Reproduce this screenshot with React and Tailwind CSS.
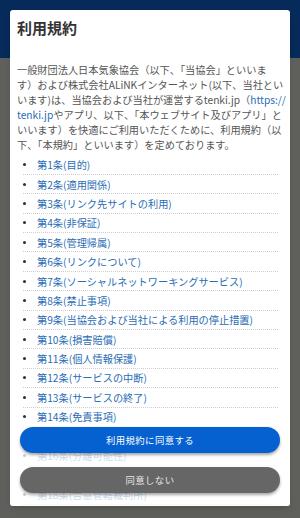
const articles = [
    "第1条(目的)",
    "第2条(適用関係)",
    "第3条(リンク先サイトの利用)",
    "第4条(非保証)",
    "第5条(管理帰属)",
    "第6条(リンクについて)",
    "第7条(ソーシャルネットワーキングサービス)",
    "第8条(禁止事項)",
    "第9条(当協会および当社による利用の停止措置)",
    "第10条(損害賠償)",
    "第11条(個人情報保護)",
    "第12条(サービスの中断)",
    "第13条(サービスの終了)",
    "第14条(免責事項)",
    "第15条(規約の変更)",
    "第16条(分離可能性)",
    "第17条(準拠法)",
    "第18条(合意管轄裁判所)",
];

export default function App() {
    return (
        <div
            className="relative w-[300px] h-[518px] overflow-hidden bg-[#5f5f5b]"
            style={{fontFamily: '"Noto Sans CJK JP", "Noto Sans", sans-serif'}}
        >
            <div className="h-[58px] bg-[#062a5a]"/>

            {/* modal */}
            <div className="absolute left-[10px] top-[10px] w-[280px] h-[496px] bg-white rounded-[3px] overflow-hidden shadow-md">
                <div className="px-[7px]">
                    <h2 className="pt-[6px] text-[15px] leading-[24px] font-bold text-[#333]">利用規約</h2>
                    <p className="mt-[21.5px] text-[10.2px] leading-[15px] text-[#555] whitespace-nowrap">
                        一般財団法人日本気象協会（以下、「当協会」といいま<br/>
                        す）および株式会社ALiNKインターネット(以下、当社とい<br/>
                        います)は、当協会および当社が運営するtenki.jp（<span className="text-[#2a6db5]">https://</span><br/>
                        <span className="text-[#2a6db5]">tenki.jp</span>やアプリ、以下、「本ウェブサイト及びアプリ」と<br/>
                        いいます）を快適にご利用いただくために、利用規約（以<br/>
                        下、「本規約」といいます）を定めております。
                    </p>
                    <ul className="mt-[4px] mx-[5.5px]">
                        {articles.map((a) => (
                            <li key={a}
                                className="flex items-center h-[19.4px] border-b border-dotted border-[#cfcfcf]">
                                <span className="ml-[0.5px] w-[3px] h-[3px] rounded-full bg-[#333]"/>
                                <a className="ml-[11px] text-[10.2px] leading-[15px] text-[#2a6db5] whitespace-nowrap">{a}</a>
                            </li>
                        ))}
                    </ul>
                </div>

                <div className="absolute inset-x-0 bottom-0 h-[82px] bg-white/75 px-[10px] pt-[3px] flex flex-col gap-[14px]">
                    <button
                        className="h-[26px] w-full rounded-full bg-[#0561cf] text-white text-[9.4px] tracking-[0.4px] shadow-[0_2px_3px_rgba(0,0,0,0.35)]">
                        利用規約に同意する
                    </button>
                    <button
                        className="h-[26px] w-full rounded-full bg-[#666666] text-[#e6e6e6] text-[9.4px] tracking-[0.4px] shadow-[0_2px_3px_rgba(0,0,0,0.35)]">
                        同意しない
                    </button>
                </div>
            </div>
        </div>
    )
}
